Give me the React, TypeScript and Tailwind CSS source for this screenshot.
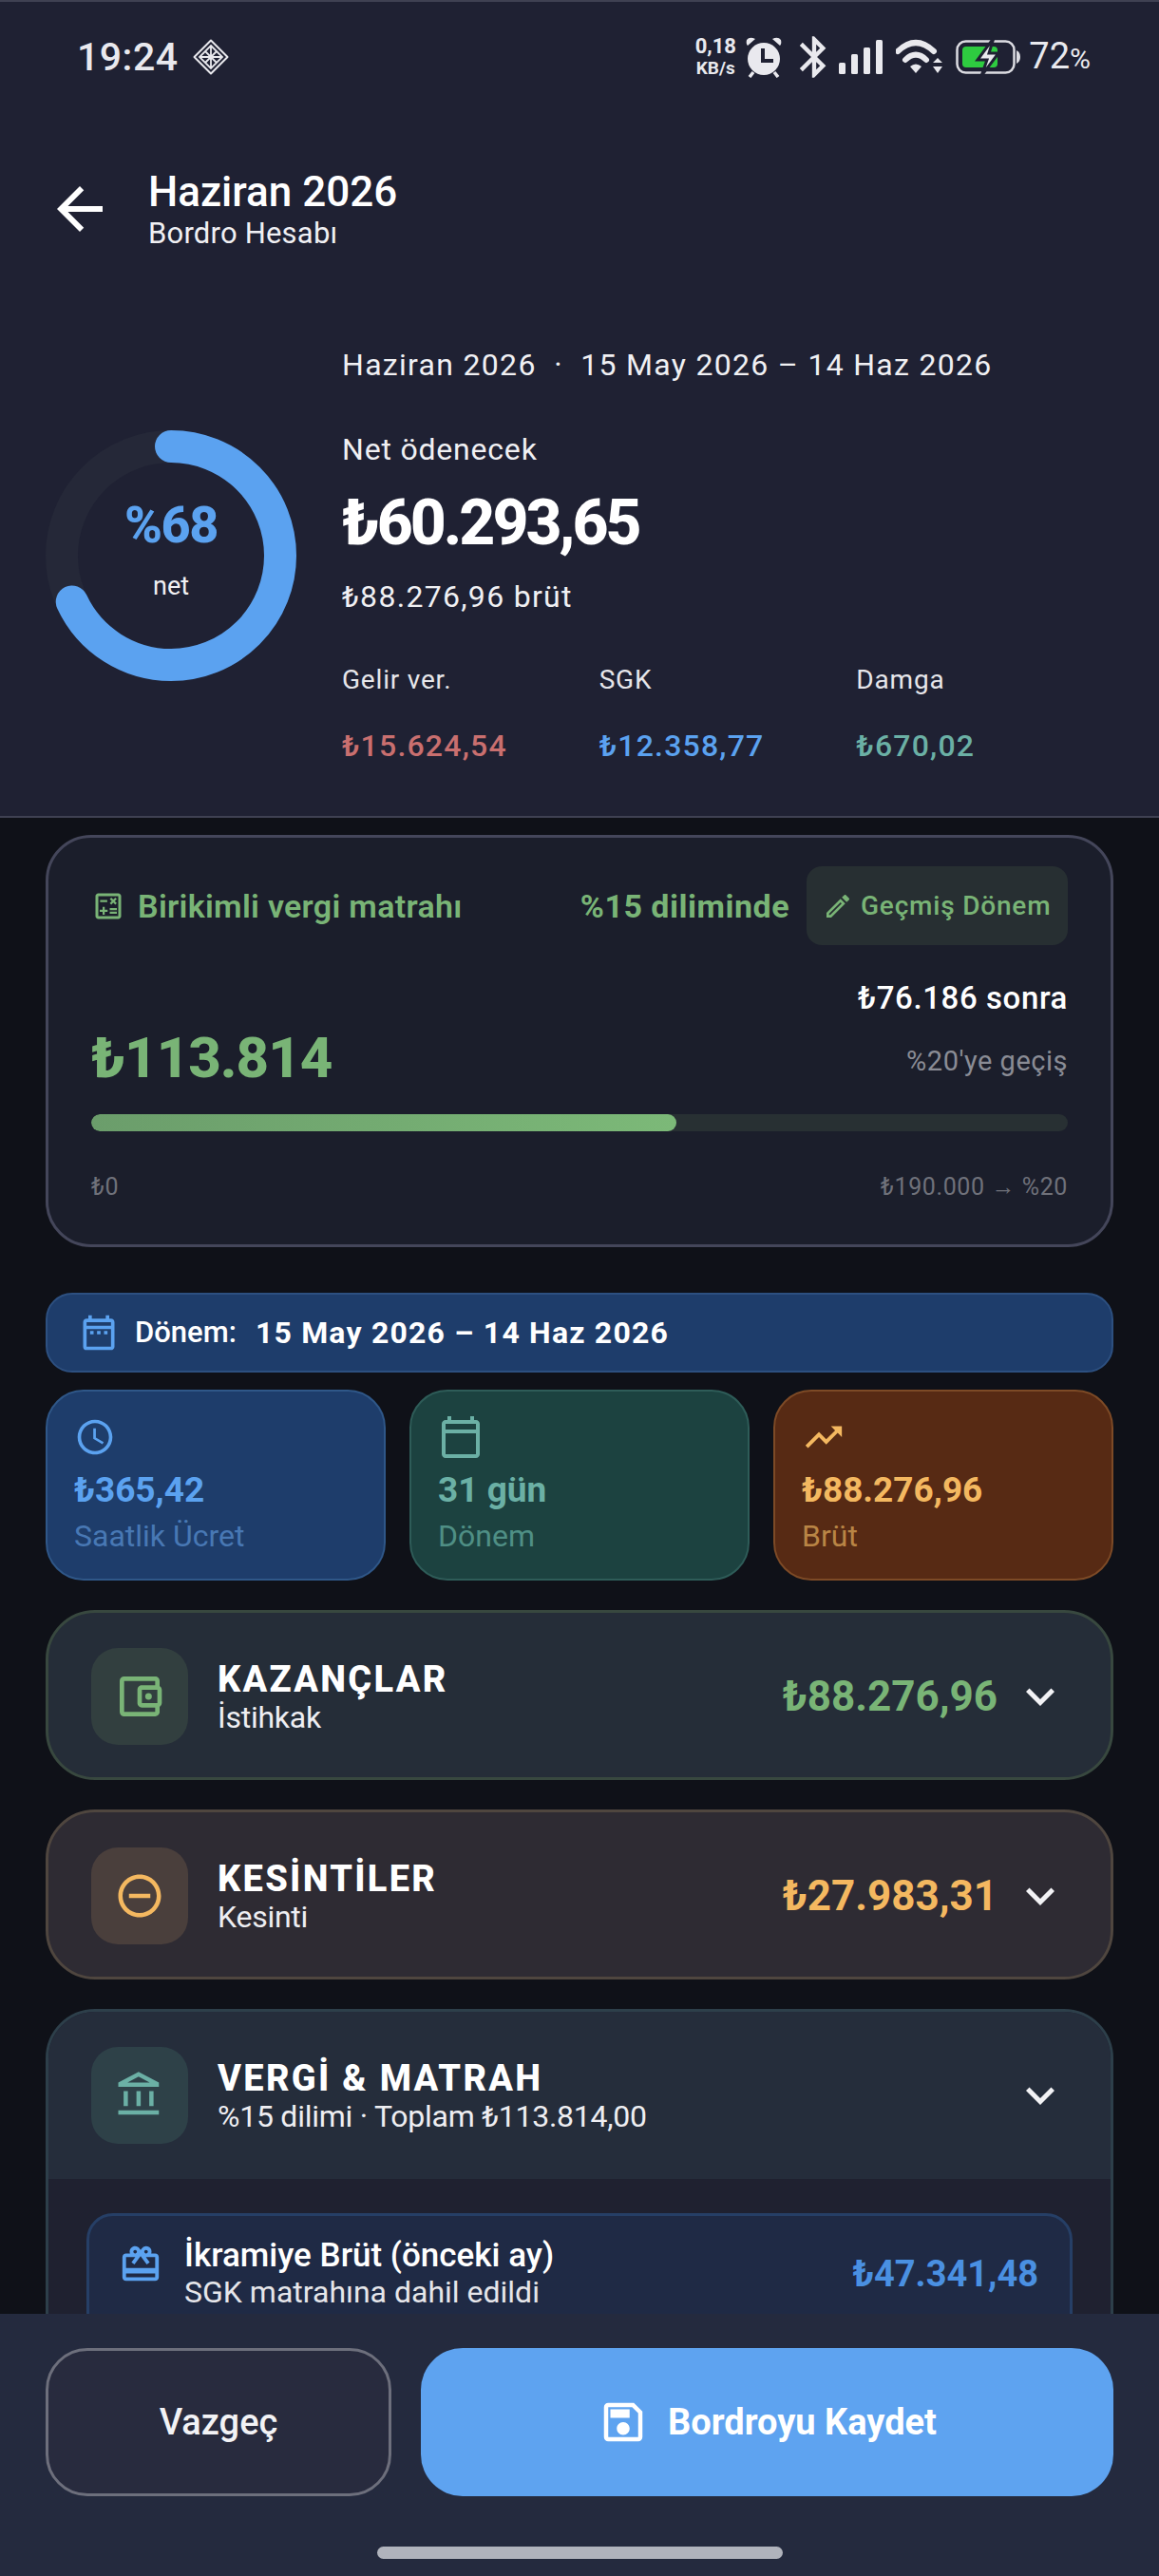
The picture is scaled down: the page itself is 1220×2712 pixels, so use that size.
import React from 'react';
import {
  MdArrowBack,
  MdOutlineCalculate,
  MdOutlineEdit,
  MdOutlineDateRange,
  MdOutlineCalendarToday,
  MdOutlineSchedule,
  MdTrendingUp,
  MdOutlineAccountBalanceWallet,
  MdOutlineRemoveCircleOutline,
  MdOutlineAccountBalance,
  MdOutlineCardGiftcard,
  MdOutlineSave,
  MdKeyboardArrowDown,
  MdBluetooth,
} from 'react-icons/md';

const StatusIcons = () => (
  <div className="flex items-center text-[#e9e9ee]">
    <div className="flex flex-col items-center w-[46px] text-[22px] leading-[24px] font-bold">
      <span>0,18</span>
      <span className="text-[19px] leading-[22px]">KB/s</span>
    </div>
    <svg className="ml-[9px]" width="38" height="44" viewBox="0 0 38 44" fill="#e9e9ee">
      <circle cx="19" cy="24" r="17" />
      <path d="M2 10 L10 3 Q4 0 1 4 Q0 8 2 10Z M36 10 L28 3 Q34 0 37 4 Q38 8 36 10Z" />
      <path d="M8 38 L4 43 M30 38 L34 43" stroke="#e9e9ee" strokeWidth="3.5" />
      <path d="M18 13 V26 H29" stroke="#1f2133" strokeWidth="4" fill="none" />
    </svg>
    <MdBluetooth className="ml-[8px]" size={52} />
    <svg className="ml-[-1px]" width="48" height="38" viewBox="0 0 48 38" fill="#e9e9ee">
      <rect x="1" y="25" width="7" height="12" rx="1.5" />
      <rect x="14" y="16" width="7" height="21" rx="1.5" />
      <rect x="27" y="9" width="7" height="28" rx="1.5" />
      <rect x="40" y="1" width="7" height="36" rx="1.5" />
    </svg>
    <svg className="ml-[13px]" width="50" height="38" viewBox="0 0 50 38" fill="none">
      <path d="M2 13 Q21 -5 40 13" stroke="#e9e9ee" strokeWidth="6" strokeLinecap="round" />
      <path d="M10 22 Q21 11 32 22" stroke="#e9e9ee" strokeWidth="6" strokeLinecap="round" />
      <path d="M15 29 Q21 24 27 29 L21 36Z" fill="#e9e9ee" />
      <path d="M39 25 L44 20 L49 25Z M39 29 L49 29 L44 36Z" fill="#e9e9ee" />
    </svg>
    <svg className="ml-[13px]" width="69" height="38" viewBox="0 0 69 38" fill="none">
      <rect x="1.5" y="2.5" width="60" height="33" rx="9" stroke="#dcdce2" strokeWidth="2.5" />
      <path d="M64 12 Q68 14 68 19 Q68 24 64 26Z" fill="#dcdce2" />
      <rect x="7" y="8" width="37" height="22" rx="4" fill="#2ecc40" />
      <path d="M40 -1 L23 22 H33 L27 39 L45 15 H35 L40 -1Z" fill="#e9e9ee" stroke="#1f2133" strokeWidth="3" />
    </svg>
    <span className="ml-[8px] text-[38px] leading-[40px]">
      72<span className="text-[30px]">%</span>
    </span>
  </div>
);

const Diamond = () => (
  <svg className="ml-[15px]" width="38" height="38" viewBox="0 0 38 38" fill="none" stroke="#e9e9ee" strokeWidth="2">
    <path d="M19 1.5 L36.5 19 L19 36.5 L1.5 19Z" strokeLinejoin="round" />
    <path d="M19 7 L31 19 L19 31 L7 19Z M13 13 L25 25 M25 13 L13 25 M19 7 V31 M7 19 H31" strokeWidth="1.8" />
  </svg>
);

const Ring = () => (
  <svg className="mt-[91px] shrink-0" width="264" height="264" viewBox="0 0 264 264" fill="none">
    <circle cx="132" cy="132" r="115" stroke="#252838" strokeWidth="34" />
    <circle
      cx="132"
      cy="132"
      r="115"
      stroke="#5ba2f0"
      strokeWidth="34"
      strokeLinecap="round"
      strokeDasharray="491.3 722.6"
      transform="rotate(-90 132 132)"
    />
  </svg>
);

const Stat = ({ icon, value, label, box, valueCls, labelCls }: any) => (
  <div className={`flex-1 h-[201px] rounded-[40px] border-2 pl-[28px] pt-[24px] ${box}`}>
    <div className={`h-[48px] flex items-center ${valueCls}`}>{icon}</div>
    <div className={`mt-[10px] text-[37px] leading-[44px] font-bold ${valueCls}`}>{value}</div>
    <div className={`mt-[6px] text-[32px] leading-[40px] ${labelCls}`}>{label}</div>
  </div>
);

const SectionHead = ({ icon, iconBox, title, sub, amount, amountCls }: any) => (
  <div className="flex items-center h-[176px] pl-[45px] pr-[44px]">
    <div className={`w-[102px] h-[102px] rounded-[28px] flex items-center justify-center ${iconBox}`}>{icon}</div>
    <div className="ml-[31px] flex-1">
      <div className="text-[38px] leading-[44px] font-extrabold tracking-[2.3px] text-white">{title}</div>
      <div className="text-[32px] leading-[36px] tracking-[-0.25px] text-[#eeeef2]">{sub}</div>
    </div>
    {amount && <div className={`text-[44px] leading-[50px] font-bold ${amountCls}`}>{amount}</div>}
    <MdKeyboardArrowDown className="ml-[15px] text-[#f2f2f5]" size={60} />
  </div>
);

export default function App() {
  return (
    <div className="relative w-[1220px] h-[2712px] overflow-hidden bg-[#0f1118] font-[Roboto,sans-serif] text-white">
      <div className="h-[861px] bg-[#1f2133] border-t-2 border-b-2 border-t-[#3f4152] border-b-[#3f4152]">
        <div className="flex items-center justify-between h-[116px] pl-[81px] pr-[72px]">
          <div className="flex items-center">
            <span className="text-[41px] leading-[48px] font-medium tracking-[0.5px] text-[#e9e9ee]">19:24</span>
            <Diamond />
          </div>
          <StatusIcons />
        </div>

        <div className="flex items-center mt-[58px] pl-[48px]">
          <MdArrowBack size={72} />
          <div className="ml-[36px]">
            <div className="text-[44px] leading-[52px] font-medium">Haziran 2026</div>
            <div className="text-[31px] leading-[36px] tracking-[0.2px] text-[#f0f0f3]">Bordro Hesabı</div>
          </div>
        </div>

        <div className="flex items-start gap-[48px] pl-[48px] mt-[98px]">
          <div className="relative">
            <Ring />
            <div className="absolute left-0 right-0 top-[161px] text-center text-[54px] leading-[60px] font-extrabold tracking-[-1.5px] text-[#5ba2f0]">%68</div>
            <div className="absolute left-0 right-0 top-[240px] text-center text-[27px] leading-[30px] text-[#f0f0f3]">net</div>
          </div>
          <div>
            <div className="text-[32px] leading-[44px] tracking-[1.3px] text-[#f0f0f3]">
              Haziran 2026 &nbsp;·&nbsp; 15 May 2026 – 14 Haz 2026
            </div>
            <div className="mt-[47px] text-[32px] leading-[40px] tracking-[0.8px] text-[#f0f0f3]">Net ödenecek</div>
            <div className="mt-[20px] text-[66px] leading-[76px] font-extrabold tracking-[-3px]">₺60.293,65</div>
            <div className="mt-[17px] text-[32px] leading-[44px] tracking-[1.3px] text-[#f0f0f3]">₺88.276,96 brüt</div>
            <div className="grid grid-cols-3 w-[812px] mt-[48px] text-[28px] leading-[36px] tracking-[0.8px] text-[#e6e6ea]">
              <span>Gelir ver.</span>
              <span>SGK</span>
              <span>Damga</span>
            </div>
            <div className="grid grid-cols-3 w-[812px] mt-[29px] text-[32px] leading-[44px] font-medium tracking-[1.2px]">
              <span className="text-[#c96f6f]">₺15.624,54</span>
              <span className="text-[#5ba2f0]">₺12.358,77</span>
              <span className="text-[#6bb0a5]">₺670,02</span>
            </div>
          </div>
        </div>
      </div>

      <div className="px-[48px] pt-[18px]">
        <div className="h-[434px] rounded-[48px] border-[3px] border-[#44465a] bg-[#1b1e2b] px-[45px] pt-[30px]">
          <div className="flex items-center text-[#79b476]">
            <MdOutlineCalculate size={36} />
            <span className="ml-[13px] text-[34px] leading-[40px] font-semibold tracking-[0.3px]">Birikimli vergi matrahı</span>
            <span className="ml-auto text-[34px] leading-[40px] font-bold tracking-[0.5px]">%15 diliminde</span>
            <div className="ml-[18px] w-[275px] h-[83px] rounded-[16px] bg-[#272f32] flex items-center pl-[17px]">
              <MdOutlineEdit size={32} />
              <span className="ml-[8px] text-[28px] leading-[34px] font-medium tracking-[0.8px]">Geçmiş Dönem</span>
            </div>
          </div>
          <div className="flex justify-between mt-[36px]">
            <div className="mt-[47px] text-[60px] leading-[72px] font-extrabold tracking-[-1px] text-[#79b476]">₺113.814</div>
            <div className="text-right">
              <div className="text-[33px] leading-[40px] font-medium tracking-[0.6px]">₺76.186 sonra</div>
              <div className="mt-[28px] text-[29px] leading-[36px] tracking-[0.5px] text-[#8a8c95]">%20'ye geçiş</div>
            </div>
          </div>
          <div className="mt-[23px] h-[18px] rounded-full bg-[#283033] overflow-hidden">
            <div className="h-full w-[616px] rounded-full bg-gradient-to-r from-[#6b9d6b] to-[#7cb978]" />
          </div>
          <div className="flex justify-between mt-[44px] text-[25px] leading-[30px] tracking-[0.6px] text-[#6f717a]">
            <span>₺0</span>
            <span>₺190.000 → %20</span>
          </div>
        </div>

        <div className="mt-[48px] h-[84px] rounded-[28px] border-2 border-[#2d5080] bg-[#1e3d6b] flex items-center pl-[32px]">
          <MdOutlineDateRange className="text-[#5ba2f0]" size={44} />
          <span className="ml-[16px] text-[31px] leading-[38px] font-medium">Dönem:</span>
          <span className="ml-[20px] text-[32px] leading-[38px] font-bold tracking-[1.2px]">15 May 2026 – 14 Haz 2026</span>
        </div>

        <div className="mt-[18px] flex gap-[25px]">
          <Stat
            icon={<MdOutlineSchedule size={44} />}
            value="₺365,42"
            label="Saatlik Ücret"
            box="bg-[#1e3d6b] border-[#2f5788]"
            valueCls="text-[#5ba2f0]"
            labelCls="text-[#4878b4]"
          />
          <Stat
            icon={<MdOutlineCalendarToday size={48} />}
            value="31 gün"
            label="Dönem"
            box="bg-[#1c4240] border-[#2e5c58]"
            valueCls="text-[#6bb0a5]"
            labelCls="text-[#4f8f85]"
          />
          <Stat
            icon={<MdTrendingUp size={46} />}
            value="₺88.276,96"
            label="Brüt"
            box="bg-[#572a14] border-[#7d4a26]"
            valueCls="text-[#f4b860]"
            labelCls="text-[#b98545]"
          />
        </div>

        <div className="mt-[31px] h-[179px] rounded-[52px] border-[3px] border-[#38483f] bg-[#252d38]">
          <SectionHead
            icon={<MdOutlineAccountBalanceWallet className="text-[#79b476]" size={56} />}
            iconBox="bg-[#323f3f]"
            title="KAZANÇLAR"
            sub="İstihkak"
            amount="₺88.276,96"
            amountCls="text-[#79b476]"
          />
        </div>

        <div className="mt-[31px] h-[179px] rounded-[52px] border-[3px] border-[#4f463f] bg-[#2e2b33]">
          <SectionHead
            icon={<MdOutlineRemoveCircleOutline className="text-[#f4b860]" size={54} />}
            iconBox="bg-[#4a3f3c]"
            title="KESİNTİLER"
            sub="Kesinti"
            amount="₺27.983,31"
            amountCls="text-[#f4b860]"
          />
        </div>

        <div className="mt-[31px] h-[420px] rounded-[52px] border-[3px] border-[#2d3f4a] bg-[#1f2130] overflow-hidden">
          <div className="bg-[#252d3b]">
            <SectionHead
              icon={<MdOutlineAccountBalance className="text-[#6bb0a5]" size={54} />}
              iconBox="bg-[#2e4148]"
              title="VERGİ & MATRAH"
              sub="%15 dilimi · Toplam ₺113.814,00"
            />
          </div>
          <div className="mt-[36px] mx-[40px] h-[150px] rounded-[28px] border-[3px] border-[#263f66] bg-[#1f2a45] flex items-start pt-[22px] pl-[31px] pr-[33px]">
            <MdOutlineCardGiftcard className="mt-[6px] text-[#5ba2f0]" size={46} />
            <div className="ml-[23px] flex-1">
              <div className="text-[35px] leading-[40px] font-medium">İkramiye Brüt (önceki ay)</div>
              <div className="text-[32px] leading-[36px] text-[#e6e6ea]">SGK matrahına dahil edildi</div>
            </div>
            <div className="mt-[17px] text-[38px] leading-[44px] font-bold text-[#4a90e2]">₺47.341,48</div>
          </div>
        </div>
      </div>

      <div className="absolute left-0 right-0 bottom-0 h-[276px] bg-[#242a3e] px-[48px] pt-[36px]">
        <div className="flex gap-[31px]">
          <div className="w-[364px] h-[156px] rounded-[44px] border-[3px] border-[#6d6f7c] bg-[#282b3e] flex items-center justify-center text-[38px] font-medium text-[#f2f2f5]">
            Vazgeç
          </div>
          <div className="flex-1 h-[156px] rounded-[44px] bg-[#5ea3f0] flex items-center justify-center text-[38px] font-bold">
            <MdOutlineSave size={54} />
            <span className="ml-[20px]">Bordroyu Kaydet</span>
          </div>
        </div>
        <div className="mt-[53px] mx-auto w-[427px] h-[13px] rounded-full bg-[#b0b3bc]" />
      </div>
    </div>
  );
}
